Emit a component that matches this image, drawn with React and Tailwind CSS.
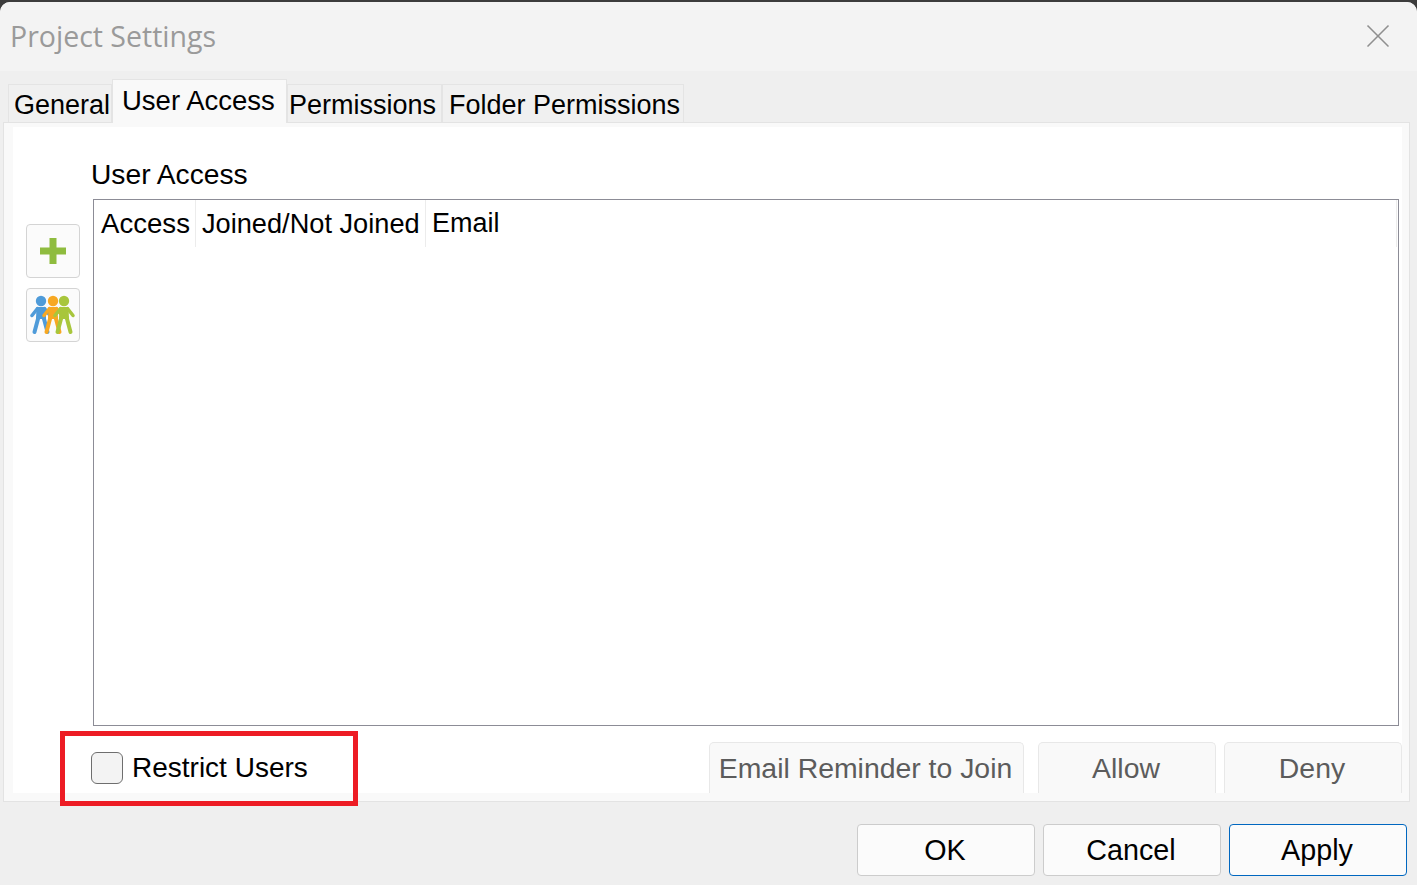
import { X } from 'lucide-react'

const arial = "font-['Liberation_Sans',Arial,sans-serif]"

function PlusIcon() {
  return (
    <svg width="26" height="26" viewBox="0 0 26 26">
      <path d="M9.500 0h7v9.500H26v7h-9.500V26h-7v-9.500H0v-7h9.500z" fill="#8fbc3f" />
    </svg>
  )
}

function Person({ x, color }) {
  return (
    <g transform={`translate(${x} 0)`}>
      <circle cx="11" cy="6" r="5.200" fill={color} />
      <path d="M6.500 12h9l.5 12H6z" fill={color} />
      <path d="M7.500 13.500L2 20.500M14.500 13.500l5.500 7" stroke={color} strokeWidth="3.500" strokeLinecap="round" fill="none" />
      <path d="M8.500 22L4.500 37M13.500 22l4 15" stroke={color} strokeWidth="4" strokeLinecap="round" fill="none" />
    </g>
  )
}

function PeopleIcon() {
  return (
    <svg width="46" height="40" viewBox="0 0 46 40">
      <Person x="0" color="#4f9bd9" />
      <Person x="12" color="#f7a823" />
      <Person x="23" color="#a8c63c" />
    </svg>
  )
}

function Tab({ label, active, className }) {
  return (
    <div
      className={
        'flex whitespace-nowrap border border-b-0 border-[#e4e4e4] ' +
        (active
          ? 'h-[44px] -mb-[1px] text-[27.500px] bg-[#f9f9f9] items-start pt-[7px] relative z-10 '
          : 'h-[38px] text-[27px] bg-[#f0f0f0] items-center pt-[4px] ') +
        className
      }
    >
      {label}
    </div>
  )
}

function ActionButton({ label, className }) {
  return (
    <div className={'h-[52px] flex items-center justify-center whitespace-nowrap text-[28.400px] pr-[2px] rounded-t-[5px] border border-b-0 border-[#e8e8e8] bg-[#f9f9f9] text-[#5c5c5c] ' + className}>
      {label}
    </div>
  )
}

function FooterButton({ label, primary }) {
  return (
    <div
      className={
        'w-[178px] h-[52px] flex items-center justify-center text-[28.700px] pr-[2px] rounded-[4px] border bg-[#fbfbfb] text-black ' +
        (primary ? 'border-[#0067c0]' : 'border-[#cccccc]')
      }
    >
      {label}
    </div>
  )
}

export default function App() {
  return (
    <div className={`w-[1417px] h-[885px] overflow-hidden bg-[#3c3c3c] pt-[2px] text-[28px] leading-none text-black ${arial}`}>
      <div className="relative h-[883px] rounded-t-[10px] bg-[#efefef] overflow-hidden">
        {/* title bar */}
        <div className="h-[69px] bg-[#f3f3f3] flex items-center justify-between pl-[10px] pr-[19px]">
          <span className="font-['Open_Sans',sans-serif] text-[28.500px] text-[#9a9a9a]">Project Settings</span>
          <X size={40} strokeWidth={1} className="text-[#8f8f8f] mb-[2px]" />
        </div>

        {/* tabs */}
        <div className="h-[51px] flex items-end pl-[8px]">
          <Tab label="General" className="w-[104px] pl-[5px]" />
          <Tab label="User Access" active className="w-[175px] pl-[9px]" />
          <Tab label="Permissions" className="w-[155px] pl-[1px]" />
          <Tab label="Folder Permissions" className="w-[242px] pl-[6px]" />
        </div>

        {/* tab page */}
        <div className="ml-[3px] w-[1407px] h-[680px] border border-[#e3e3e3] bg-[#f9f9f9] pt-[4px] pl-[9px] pr-[7px] pb-[7px]">
          <div className="h-[666px] bg-white flex overflow-hidden">
            <div className="w-[79px] pl-[13px] pt-[97px] flex flex-col gap-[10px]">
              <div className="w-[54px] h-[54px] rounded-[4px] border border-[#d4d4d4] bg-[#fbfbfb] flex items-center justify-center">
                <PlusIcon />
              </div>
              <div className="w-[54px] h-[54px] rounded-[4px] border border-[#d4d4d4] bg-[#fbfbfb] flex items-center justify-center">
                <PeopleIcon />
              </div>
            </div>
            <div className="flex-1 flex flex-col">
              <div className="h-[72px] shrink-0 flex items-end -ml-[1px] pb-[11px] text-[28.200px]">User Access</div>
              <div className="ml-[1px] mr-[3px] h-[527px] shrink-0 border border-[#8c8c96]">
                <div className="h-[47px] flex border-r border-[#ececec] mr-[1px] text-[27.600px] whitespace-nowrap">
                  <div className="w-[102px] pl-[7px] border-r border-[#ececec] flex items-center">Access</div>
                  <div className="w-[230px] pl-[6px] border-r border-[#ececec] flex items-center text-[27.200px]">Joined/Not Joined</div>
                  <div className="pl-[6px] flex items-center text-[27px]">Email</div>
                </div>
              </div>
              <div className="mt-[16px] shrink-0 flex items-center justify-between">
                <div className="flex items-center -ml-[1px] gap-[9px]">
                  <div className="w-[32px] h-[32px] rounded-[6px] border border-[#6e6e6e] bg-[#f3f3f3]" />
                  <span>Restrict Users</span>
                </div>
                <div className="flex gap-[8px]">
                  <ActionButton label="Email Reminder to Join" className="w-[315px] mr-[6px]" />
                  <ActionButton label="Allow" className="w-[178px]" />
                  <ActionButton label="Deny" className="w-[178px]" />
                </div>
              </div>
            </div>
          </div>
        </div>

        {/* dialog buttons */}
        <div className="mt-[22px] pr-[10px] flex justify-end gap-[8px]">
          <FooterButton label="OK" />
          <FooterButton label="Cancel" />
          <FooterButton label="Apply" primary />
        </div>

        {/* red annotation box */}
        <div className="absolute left-[60px] top-[729px] w-[298px] h-[75px] border-[5px] border-[#ed1c24]" />
      </div>
    </div>
  )
}
